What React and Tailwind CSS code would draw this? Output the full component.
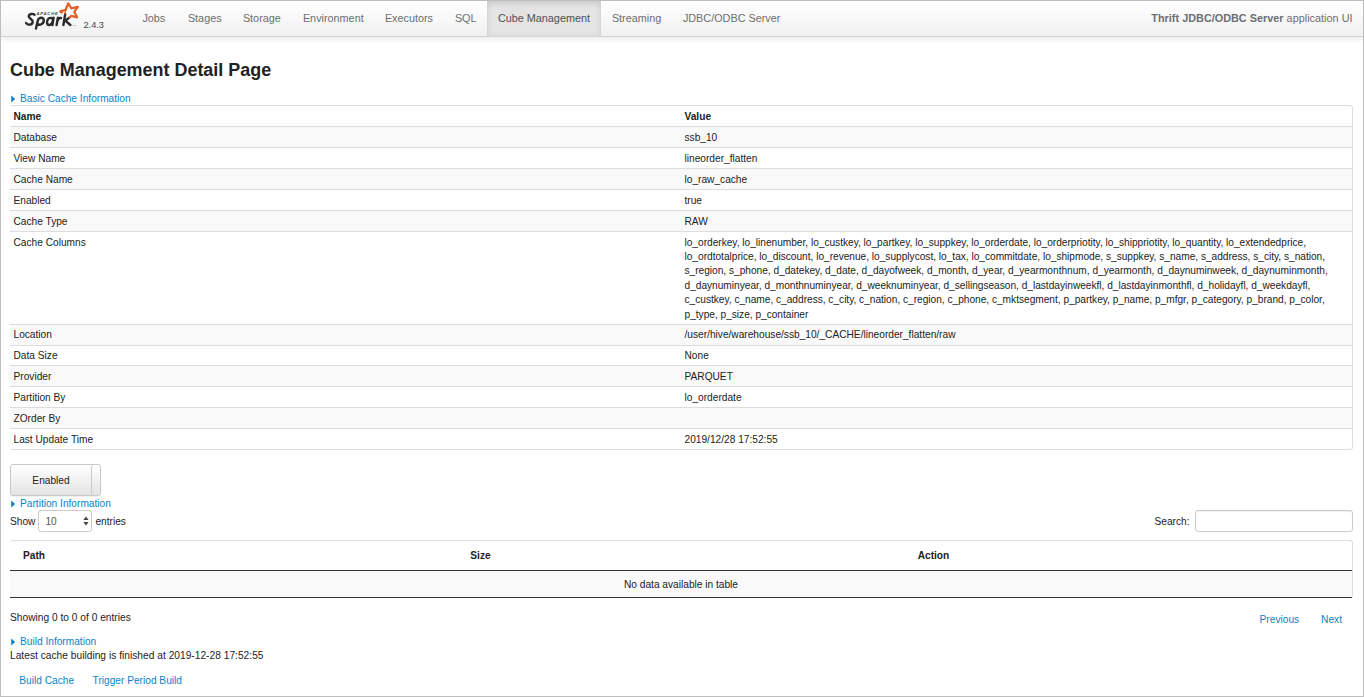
import React from 'react';

const TABS = [
  { label: 'Jobs', width: 'w-[45.5px]' },
  { label: 'Stages', width: 'w-[55px]' },
  { label: 'Storage', width: 'w-[60px]' },
  { label: 'Environment', width: 'w-[82px]' },
  { label: 'Executors', width: 'w-[70px]' },
  { label: 'SQL', width: 'w-[43px]' },
  { label: 'Cube Management', width: 'w-[114px]', active: true },
  { label: 'Streaming', width: 'w-[71px]' },
  { label: 'JDBC/ODBC Server', width: 'w-[120px]' },
];

const COLUMN_LINES = [
  'lo_orderkey, lo_linenumber, lo_custkey, lo_partkey, lo_suppkey, lo_orderdate, lo_orderpriotity, lo_shippriotity, lo_quantity, lo_extendedprice,',
  'lo_ordtotalprice, lo_discount, lo_revenue, lo_supplycost, lo_tax, lo_commitdate, lo_shipmode, s_suppkey, s_name, s_address, s_city, s_nation,',
  's_region, s_phone, d_datekey, d_date, d_dayofweek, d_month, d_year, d_yearmonthnum, d_yearmonth, d_daynuminweek, d_daynuminmonth,',
  'd_daynuminyear, d_monthnuminyear, d_weeknuminyear, d_sellingseason, d_lastdayinweekfl, d_lastdayinmonthfl, d_holidayfl, d_weekdayfl,',
  'c_custkey, c_name, c_address, c_city, c_nation, c_region, c_phone, c_mktsegment, p_partkey, p_name, p_mfgr, p_category, p_brand, p_color,',
  'p_type, p_size, p_container',
];

const CACHE_INFO = [
  ['Database', 'ssb_10'],
  ['View Name', 'lineorder_flatten'],
  ['Cache Name', 'lo_raw_cache'],
  ['Enabled', 'true'],
  ['Cache Type', 'RAW'],
  ['Cache Columns', COLUMN_LINES],
  ['Location', '/user/hive/warehouse/ssb_10/_CACHE/lineorder_flatten/raw'],
  ['Data Size', 'None'],
  ['Provider', 'PARQUET'],
  ['Partition By', 'lo_orderdate'],
  ['ZOrder By', ''],
  ['Last Update Time', '2019/12/28 17:52:55'],
];

// ── Navbar ────────────────────────────────────────────────────────────────────
function SparkLogo() {
  return (
    <svg width="58" height="32" viewBox="0 0 58 32" className="shrink-0">
      <g fill="none" stroke="#2b2b2b" strokeWidth="2.4" strokeLinecap="round" strokeLinejoin="round">
        <path d="M11.6 13.8C9.8 12.2 6 12.9 5.7 15.2C5.4 17.6 10.2 18.1 9.7 21C9.3 24 5 24.8 3 21.9" />
        <path d="M13 27.6L14.8 19.6C15.6 16.2 20.6 15.6 20.8 19C21 22.8 16.4 25.2 14.2 22.6" />
        <path d="M30.6 16.8L29.4 24M30 19C29.6 16.3 26.2 16.3 24.8 18.5C23.2 21.2 24.1 24.2 26.2 24C28 23.8 29.3 22 30 19" />
        <path d="M33.6 24L34.9 16.8M34.6 19.6C35.2 17.6 36.6 16.7 38 17" />
        <path d="M40.4 24L42.2 13M41.1 20.4L46.2 16.7M42.6 19.8L47.4 24" />
      </g>
      <path
        d="M39.4 12.2L37.2 10.4L42.6 8.9L45.2 2.4L48.4 7.4L54.8 5.8L51.3 10.8L54 16.3L48.4 14.8L46 17"
        fill="none"
        stroke="#e0622a"
        strokeWidth="2.3"
        strokeLinejoin="round"
      />
      <path d="M42.6 8.9L42 13.4" fill="none" stroke="#e0622a" strokeWidth="1.3" />
      <text x="13.6" y="13.6" fontSize="4.2" fontWeight="700" fontStyle="italic" letterSpacing="0.75" fill="#444" fontFamily="Liberation Sans, sans-serif">
        APACHE
      </text>
      <text x="49.8" y="25.4" fontSize="2.4" fill="#777" fontFamily="Liberation Sans, sans-serif">TM</text>
    </svg>
  );
}

function Navbar() {
  return (
    <header className="flex h-[36px] shrink-0 border-b border-[#d4d4d4] bg-linear-to-b from-white to-[#f1f1f1] text-[10.83px] text-[#6e6e6e] shadow-[0_1px_7px_rgba(0,0,0,0.12)]">
      <div className="flex w-[130px] shrink-0 pl-[22px]">
        <SparkLogo />
        <span className="mt-[17px] ml-[2.5px] text-[9.2px] leading-[14px] text-[#444]">2.4.3</span>
      </div>
      <nav className="flex">
        {TABS.map(({ label, width, active }) => (
          <a
            key={label}
            className={`${width} shrink-0 whitespace-nowrap pl-[11.4px] leading-[35px] ${
              active ? 'bg-[#e4e4e4] text-[#505050] shadow-[inset_0_2px_6px_rgba(0,0,0,0.13)]' : ''
            }`}
          >
            {label}
          </a>
        ))}
      </nav>
      <p className="ml-auto pr-[10.5px] leading-[35px] whitespace-nowrap tracking-[0.02px]">
        <strong>Thrift JDBC/ODBC Server</strong> application UI
      </p>
    </header>
  );
}

// ── Secciones ─────────────────────────────────────────────────────────────────
function SectionToggle({ children }) {
  return (
    <a className="flex h-[14.4px] items-center pt-px leading-[14.4px] text-[#0d82c8]">
      <svg width="10" height="8" viewBox="0 0 10 8" className="shrink-0">
        <path d="M1.2 0.6L5.2 4L1.2 7.4Z" fill="#0d82c8" />
      </svg>
      {children}
    </a>
  );
}

function CacheTable() {
  return (
    <div className="rounded-[3px] border border-l-0 border-[#dddddd] leading-[14.4px]">
      <div className="grid h-[19.9px] grid-cols-2 items-center pt-px font-bold">
        <span className="pl-[3.5px]">Name</span>
        <span className="pl-[3.5px]">Value</span>
      </div>
      {CACHE_INFO.map(([name, value], i) => (
        <div
          key={name}
          className={`grid grid-cols-2 border-t border-[#dddddd] pt-[3.8px] pb-[1.7px] ${i % 2 === 0 ? 'bg-[#f9f9f9]' : ''}`}
        >
          <span className="pl-[3.5px]">{name}</span>
          <div className="min-h-[14.4px] pl-[3.5px] whitespace-nowrap">
            {Array.isArray(value)
              ? value.map((line) => <p key={line} className="tracking-[-0.015px]">{line}</p>)
              : value}
          </div>
        </div>
      ))}
    </div>
  );
}

function PartitionTable() {
  return (
    <div className="mt-[8px] rounded-[3px] border-t border-r border-[#dddddd]">
      <div className="grid h-[30px] grid-cols-3 items-center border-b border-[#333] font-bold">
        <span className="pl-[13px]">Path</span>
        <span className="pl-[13px]">Size</span>
        <span className="pl-[13px]">Action</span>
      </div>
      <div className="h-[27px] border-b border-[#333] bg-[#f9f9f9] text-center leading-[27.5px]">
        No data available in table
      </div>
    </div>
  );
}

export default function App() {
  return (
    <div className="flex h-[697px] w-[1364px] flex-col overflow-hidden border border-[#bdbdbd] bg-white font-['Liberation_Sans',Arial,sans-serif] text-[10.17px] text-[#222222]">
      <Navbar />
      <main className="px-[9px] pr-[10px]">
        <h1 className="mt-[20px] mb-[8px] h-[26px] text-[17.95px] leading-[26px] font-bold">Cube Management Detail Page</h1>
        <SectionToggle>Basic Cache Information</SectionToggle>
        <CacheTable />

        <button className="mt-[14px] flex h-[32px] w-[91px] rounded-[3px] border border-[#c8c8c8] bg-linear-to-b from-white to-[#e4e4e4] leading-[31px] shadow-[0_1px_1px_rgba(0,0,0,0.06)]">
          <span className="grow text-center">Enabled</span>
          <span className="h-full w-[9px] rounded-[3px] border-l border-[#c8c8c8]" />
        </button>

        <SectionToggle>Partition Information</SectionToggle>
        <div className="-mt-[0.6px] flex h-[22px] items-center">
          <span className="pt-px">Show</span>
          <div className="ml-[3px] flex h-[22px] w-[54px] items-center justify-between rounded-[3px] border border-[#cccccc] pr-[2px] pl-[6px] text-[#555]">
            <span className="pt-[1.5px]">10</span>
            <svg width="6" height="10" viewBox="0 0 6 10">
              <path d="M3 0.4L5.6 4H0.4ZM3 9.6L5.6 6H0.4Z" fill="#444" />
            </svg>
          </div>
          <span className="ml-[3px] pt-px">entries</span>
          <span className="ml-auto pt-px">Search:</span>
          <input className="ml-[5px] h-[22px] w-[158.5px] rounded-[3px] border border-[#cccccc] shadow-[inset_0_1px_1px_rgba(0,0,0,0.06)]" />
        </div>
        <PartitionTable />

        <div className="flex h-[36.5px] justify-between">
          <p className="mt-[12px] leading-[15px] tracking-[0.02px]">Showing 0 to 0 of 0 entries</p>
          <div className="mt-[14px] flex gap-[22px] pr-[11px] leading-[15px] text-[#0d82c8]">
            <a>Previous</a>
            <a>Next</a>
          </div>
        </div>

        <SectionToggle>Build Information</SectionToggle>
        <p className="mt-[0.3px] leading-[14.4px] tracking-[0.03px]">Latest cache building is finished at 2019-12-28 17:52:55</p>
        <div className="mt-[11px] flex gap-[18.5px] pl-[9.3px] leading-[14.4px] text-[#0d82c8]">
          <a>Build Cache</a>
          <a>Trigger Period Build</a>
        </div>
      </main>
    </div>
  );
}
